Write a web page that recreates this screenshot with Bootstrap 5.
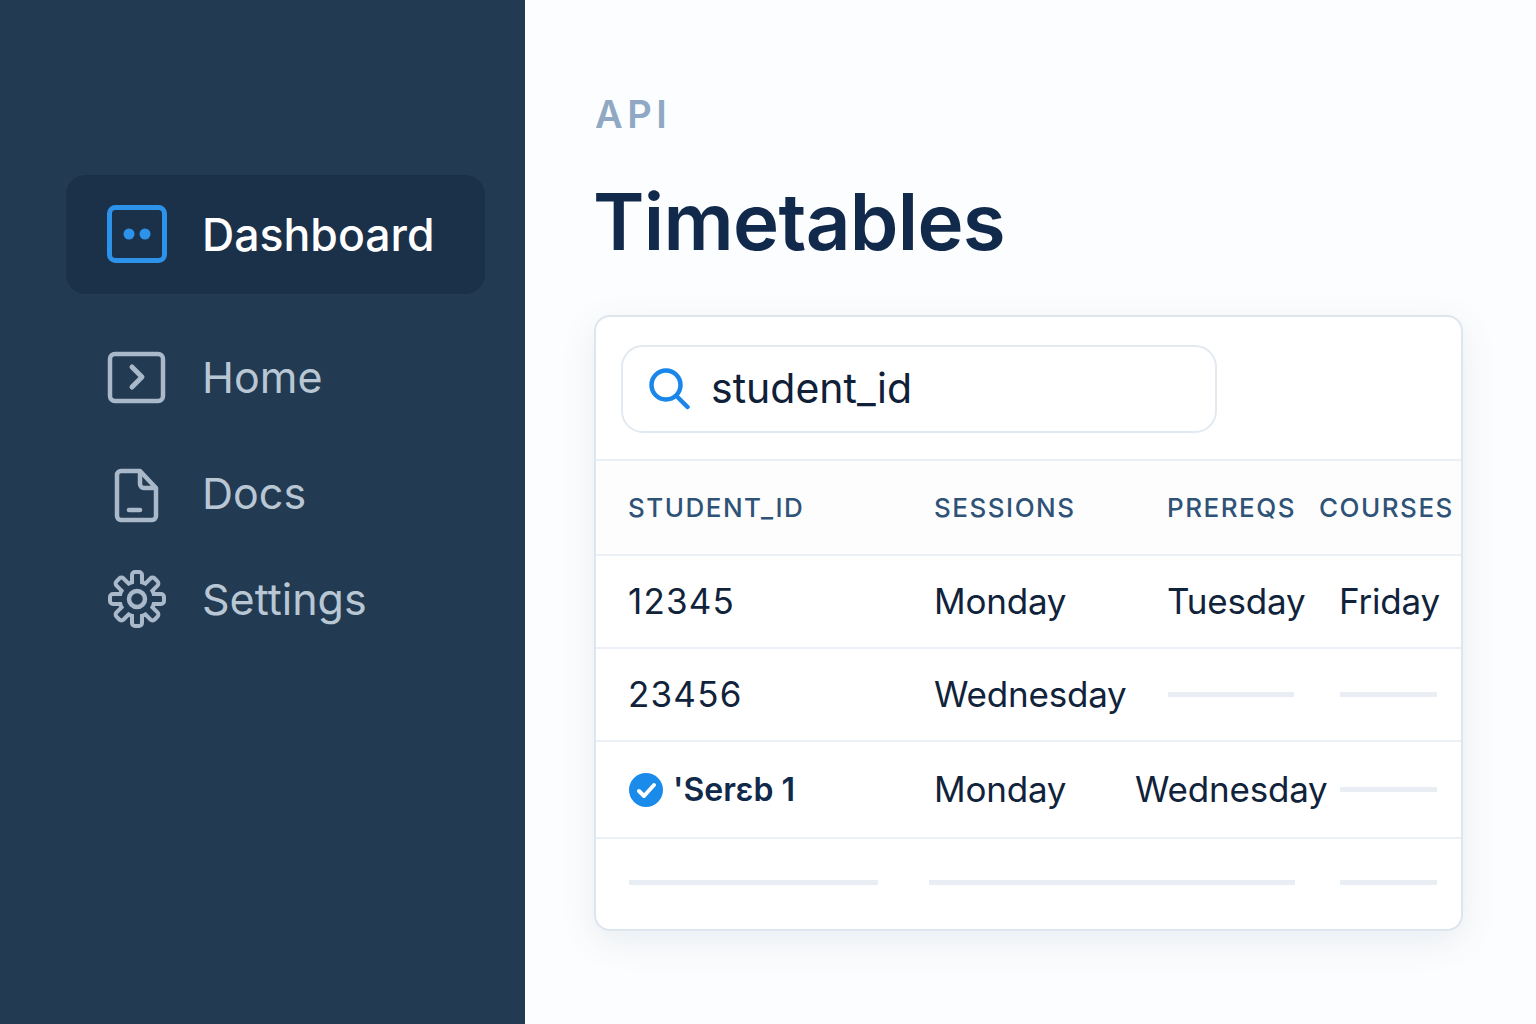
<!DOCTYPE html>
<html lang="en">
<head>
  <meta charset="UTF-8" />
  <meta name="viewport" content="width=device-width, initial-scale=1.0"/>
  <title>Timetables</title>
  <link href="https://cdn.jsdelivr.net/npm/bootstrap@5.3.3/dist/css/bootstrap.min.css" rel="stylesheet">
  <style>
  body {
    font-family: Inter, "Liberation Sans", sans-serif;
    background: #fcfdfe;
    color: #10233b;
  }
  .app-shell { height: 1024px; overflow: hidden; }

  .side-panel {
    width: 525px;
    flex: none;
    background: #223a52;
    padding: 175px 40px 0 66px;
  }
  .side-link {
    color: #b9c7d5;
    font-size: 43px;
    line-height: 60px;
    text-decoration: none;
    padding-left: 41px;
    gap: 35px;
  }
  .side-link:hover { color: #b9c7d5; }
  .side-link.is-active {
    height: 119px;
    background: #1b3049;
    border-radius: 20px;
    color: #fff;
    font-size: 44.6px;
    font-weight: 500;
  }
  .link-home { margin-top: 53px; }
  .link-docs { margin-top: 56px; }
  .link-settings { margin-top: 46px; }
  .side-ico { width: 60px; height: 60px; flex: none; }

  .main-panel { padding: 91px 0 0 70px; width: 940px; }
  .api-label {
    color: #8fa8c3;
    font-size: 38px;
    font-weight: 600;
    letter-spacing: 4.6px;
    line-height: 46px;
  }
  .page-title {
    color: #11294a;
    font-size: 78px;
    font-weight: 600;
    letter-spacing: -0.7px;
    line-height: 92px;
    margin: 39px 0 47px -2px;
  }

  .table-card {
    width: 869px;
    height: 616px;
    margin-left: -1px;
    background: #fff;
    border: 2px solid #dde5ef;
    border-radius: 16px;
    box-shadow: 0 10px 34px rgba(60, 90, 130, 0.1);
    overflow: hidden;
  }
  .search-wrap { height: 142px; padding: 28px 0 0 25px; }
  .search-box {
    width: 596px;
    height: 88px;
    border: 2px solid #e3e9f1;
    border-radius: 22px;
    padding-left: 25px;
    gap: 21px;
    font-size: 41px;
    color: #0f2038;
  }

  .time-table { table-layout: fixed; width: 868px; margin: 0; }
  .time-table th, .time-table td {
    padding: 0;
    vertical-align: middle;
    background: transparent;
    border-bottom: 2px solid #ebf0f6;
    border-top: 0;
    color: #10233b;
    font-size: 35px;
    font-weight: 400;
    letter-spacing: -0.2px;
    white-space: nowrap;
  }
  .time-table tr:first-child th { border-top: 2px solid #ebf0f6; }
  .time-table th {
    color: #2f5277;
    font-size: 26px;
    font-weight: 500;
    letter-spacing: 1.5px;
    height: 95px;
    background: #fdfdfe;
  }
  .time-table .rule-row td { height: 93px; }
  .time-table .check-row td { height: 97px; }
  .time-table .blank-row td { height: 93px; border-bottom: 0; padding-bottom: 6px; }
  .time-table .first-cell { padding-left: 32px; }
  .time-table .id-cell { letter-spacing: 1.2px; }
  .shift-in { padding-left: 20px !important; }
  .shift-back { margin-left: -32px; }
  .blank-line {
    display: block;
    height: 5px;
    margin-left: 1px;
    background: #e9eef4;
  }
  .line-prereq { width: 126px; }
  .line-course { width: 97px; }
  .line-id { width: 249px; }
  .line-wide { width: 366px; margin-left: -5px; }
  .odd-id {
    font-size: 32px;
    font-weight: 600;
    letter-spacing: 0;
    color: #11294a;
  }
  .check-gap { gap: 10px; margin-left: 1px; }
  </style>
</head>
<body>

<div class="app-shell d-flex">
  <nav class="side-panel d-flex flex-column">
    <a href="#" class="side-link is-active d-flex align-items-center">
      <svg class="side-ico" viewBox="0 0 60 60" fill="none">
        <rect x="2.5" y="2.5" width="55" height="53" rx="6" stroke="#2d93ea" stroke-width="5"/>
        <circle cx="22" cy="29" r="5.5" fill="#2d93ea"/>
        <circle cx="38" cy="29" r="5.5" fill="#2d93ea"/>
      </svg>
      Dashboard
    </a>
    <a href="#" class="side-link link-home d-flex align-items-center">
      <svg class="side-ico" viewBox="0 0 60 60" fill="none" stroke="#a9b9c9" stroke-width="4.5">
        <rect x="3" y="7" width="53" height="47" rx="5"/>
        <path d="M25 20l10 10-10 10" stroke-width="5" stroke-linecap="round" stroke-linejoin="round"/>
      </svg>
      Home
    </a>
    <a href="#" class="side-link link-docs d-flex align-items-center">
      <svg class="side-ico" viewBox="0 0 60 60" fill="none" stroke="#a9b9c9" stroke-width="4.5" stroke-linejoin="round" stroke-linecap="round">
        <path d="M14 8h19l16 17v28a4 4 0 0 1-4 4H14a4 4 0 0 1-4-4V12a4 4 0 0 1 4-4z"/>
        <path d="M33 9v12a4 4 0 0 0 4 4h11"/>
        <path d="M22 47h11"/>
      </svg>
      Docs
    </a>
    <a href="#" class="side-link link-settings d-flex align-items-center">
      <svg class="side-ico" viewBox="0 0 60 60">
        <defs>
          <g id="gearShape">
            <circle r="15.5"/>
            <rect x="-3" y="-25" width="6" height="12" rx="1" id="gearTooth"/>
            <use href="#gearTooth" transform="rotate(45)"/>
            <use href="#gearTooth" transform="rotate(90)"/>
            <use href="#gearTooth" transform="rotate(135)"/>
            <use href="#gearTooth" transform="rotate(180)"/>
            <use href="#gearTooth" transform="rotate(225)"/>
            <use href="#gearTooth" transform="rotate(270)"/>
            <use href="#gearTooth" transform="rotate(315)"/>
          </g>
        </defs>
        <use href="#gearShape" transform="translate(30 30)" fill="#a9b9c9" stroke="#a9b9c9" stroke-width="8" stroke-linejoin="round"/>
        <use href="#gearShape" transform="translate(30 30)" fill="#223a52"/>
        <circle cx="30" cy="30" r="8" fill="none" stroke="#a9b9c9" stroke-width="4.5"/>
      </svg>
      Settings
    </a>
  </nav>

  <main class="main-panel">
    <div class="api-label">API</div>
    <h1 class="page-title">Timetables</h1>

    <div class="table-card">
      <div class="search-wrap">
        <div class="search-box d-flex align-items-center">
          <svg width="42" height="42" viewBox="0 0 42 42" fill="none" stroke="#1a86ea" stroke-width="4.5" stroke-linecap="round">
            <circle cx="18" cy="17" r="14.5"/>
            <path d="M28.5 28l11 11"/>
          </svg>
          student_id
        </div>
      </div>
      <table class="table time-table">
        <colgroup>
          <col style="width:338px"><col style="width:233px"><col style="width:152px"><col style="width:145px">
        </colgroup>
        <thead>
          <tr>
            <th class="first-cell">STUDENT_ID</th>
            <th>SESSIONS</th>
            <th>PREREQS</th>
            <th>COURSES</th>
          </tr>
        </thead>
        <tbody>
          <tr class="rule-row">
            <td class="first-cell id-cell">12345</td>
            <td>Monday</td>
            <td>Tuesday</td>
            <td class="shift-in">Friday</td>
          </tr>
          <tr class="rule-row">
            <td class="first-cell id-cell">23456</td>
            <td>Wednesday</td>
            <td><span class="blank-line line-prereq"></span></td>
            <td class="shift-in"><span class="blank-line line-course"></span></td>
          </tr>
          <tr class="check-row">
            <td class="first-cell">
              <div class="d-flex align-items-center check-gap">
                <svg width="34" height="34" viewBox="0 0 34 34">
                  <circle cx="17" cy="17" r="17" fill="#1a8bea"/>
                  <path d="M10 18l5 5 10-11" fill="none" stroke="#fff" stroke-width="4" stroke-linecap="round" stroke-linejoin="round"/>
                </svg>
                <span class="odd-id">'Serεb 1</span>
              </div>
            </td>
            <td>Monday</td>
            <td><span class="shift-back">Wednesday</span></td>
            <td class="shift-in"><span class="blank-line line-course"></span></td>
          </tr>
          <tr class="blank-row">
            <td class="first-cell"><span class="blank-line line-id"></span></td>
            <td colspan="2"><span class="blank-line line-wide"></span></td>
            <td class="shift-in"><span class="blank-line line-course"></span></td>
          </tr>
        </tbody>
      </table>
    </div>
  </main>
</div>

<script src="https://cdn.jsdelivr.net/npm/bootstrap@5.3.3/dist/js/bootstrap.bundle.min.js"></script>
</body>
</html>
